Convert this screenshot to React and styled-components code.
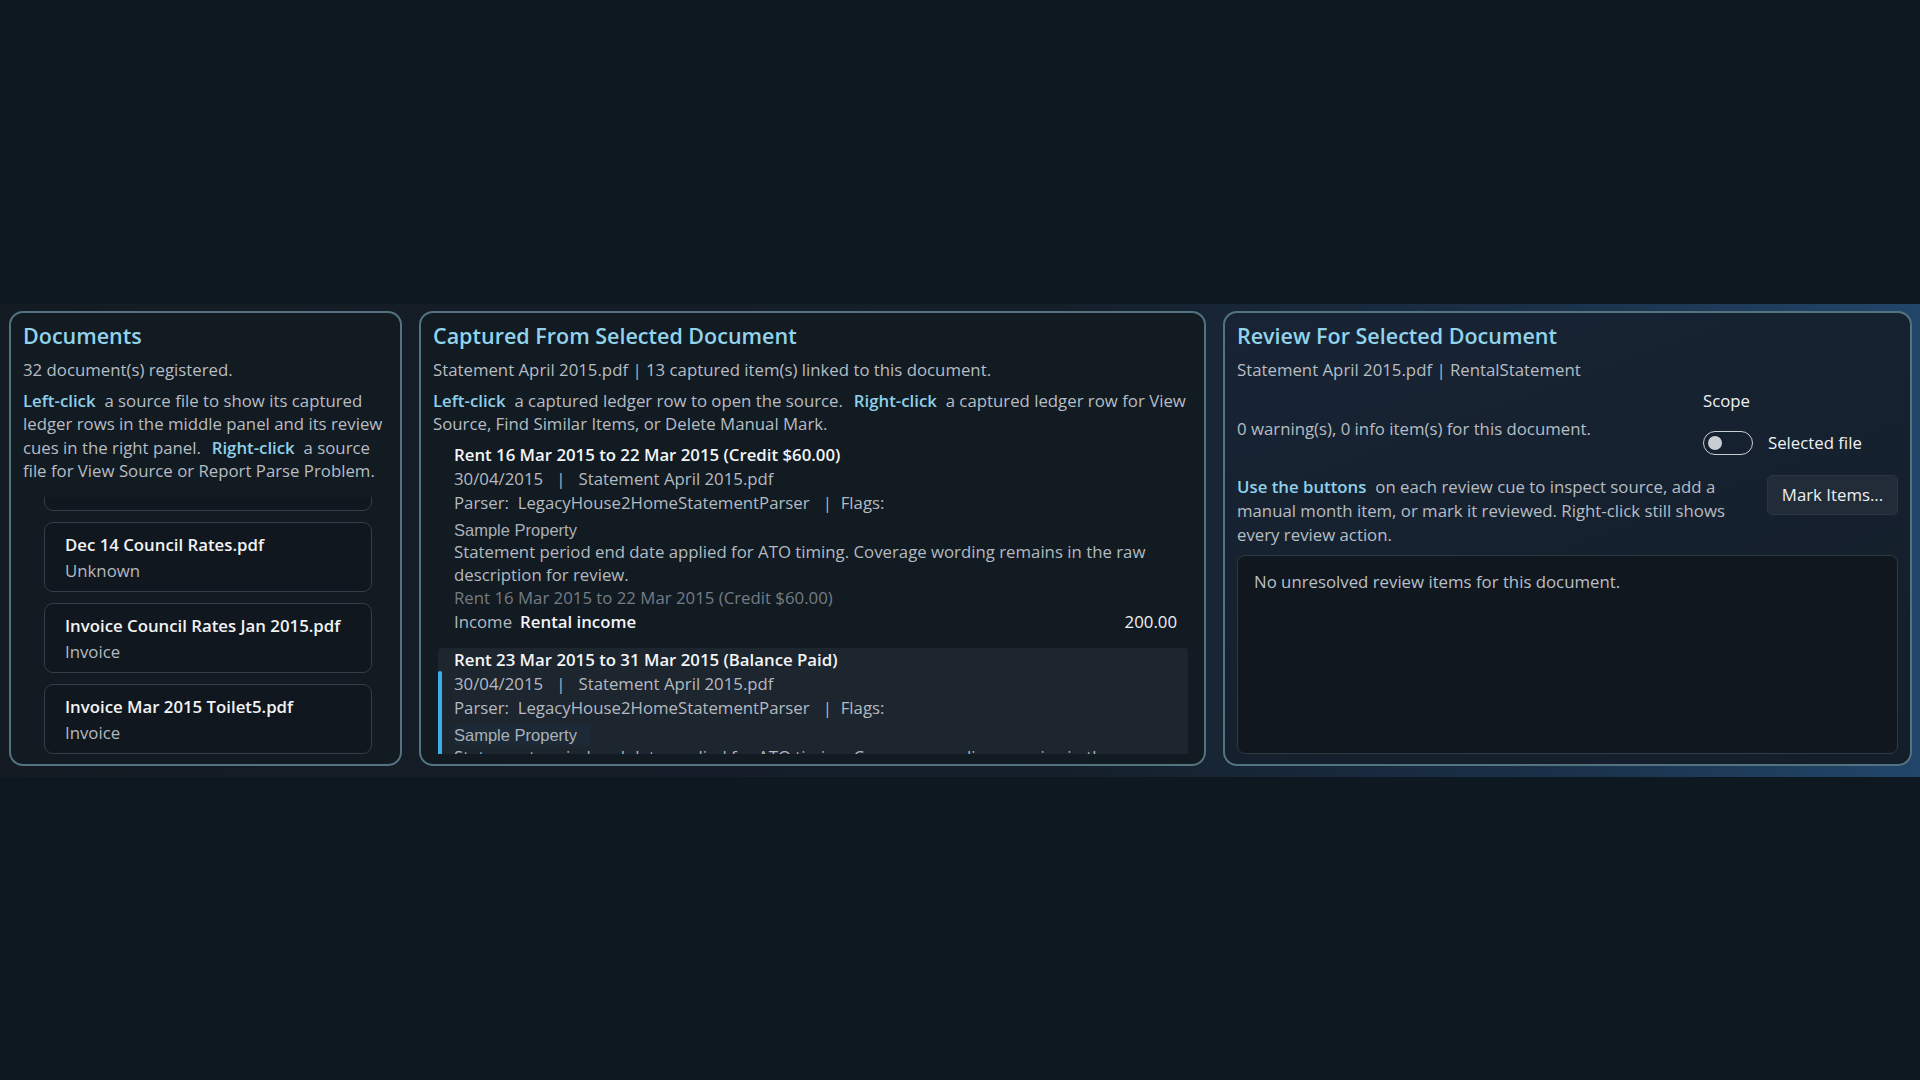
import React from 'react'
import styled, { createGlobalStyle } from 'styled-components'

const GlobalStyle = createGlobalStyle`
  * { box-sizing: border-box; }
  html, body {
    margin: 0;
    padding: 0;
    background: #0e1820;
  }
  body {
    font-family: "Open Sans", "Noto Sans", sans-serif;
    font-size: 16.8px;
    color: #b6bdc4;
  }
`

const documents = [
  { name: 'Nov 14 Council Rates.pdf', kind: 'Unknown' },
  { name: 'Dec 14 Council Rates.pdf', kind: 'Unknown' },
  { name: 'Invoice Council Rates Jan 2015.pdf', kind: 'Invoice' },
  { name: 'Invoice Mar 2015 Toilet5.pdf', kind: 'Invoice' },
]

const entries = [
  {
    id: 1,
    title: 'Rent 16 Mar 2015 to 22 Mar 2015 (Credit $60.00)',
    date: '30/04/2015',
    file: 'Statement April 2015.pdf',
    parser: 'LegacyHouse2HomeStatementParser',
    property: 'Sample Property',
    note: 'Statement period end date applied for ATO timing. Coverage wording remains in the raw description for review.',
    raw: 'Rent 16 Mar 2015 to 22 Mar 2015 (Credit $60.00)',
    type: 'Income',
    category: 'Rental income',
    amount: '200.00',
  },
  {
    id: 2,
    title: 'Rent 23 Mar 2015 to 31 Mar 2015 (Balance Paid)',
    date: '30/04/2015',
    file: 'Statement April 2015.pdf',
    parser: 'LegacyHouse2HomeStatementParser',
    property: 'Sample Property',
    note: 'Statement period end date applied for ATO timing. Coverage wording remains in the raw description for review.',
    raw: 'Rent 23 Mar 2015 to 31 Mar 2015 (Balance Paid)',
    type: 'Income',
    category: 'Rental income',
    amount: '450.00',
    selected: true,
  },
]

const Page = styled.div`
  min-height: 100vh;
  display: flex;
  align-items: center;
`

const Band = styled.main`
  width: 100%;
  display: grid;
  grid-template-columns: 393px 787px 1fr;
  column-gap: 17px;
  padding: 7px 8px 11px 9px;
  background: linear-gradient(90deg, #141b23 0%, #151f2a 55%, #1a3048 80%, #21466a 100%);
`

const Panel = styled.section`
  height: 455px;
  display: flex;
  flex-direction: column;
  padding: 8px ${p => (p.$tight ? '8px' : '12px')} 10px 12px;
  border: 2px solid #52737f;
  border-radius: 14px;
  background: ${p => (p.$tinted ? 'linear-gradient(160deg, #182434 0%, #141e2a 100%)' : '#121a22')};
  overflow: hidden;
`

const Title = styled.h2`
  margin: 0;
  font-size: 21.5px;
  font-weight: 600;
  line-height: 30px;
  color: #92d3ec;
`

const Sub = styled.p`
  margin: 7px 0 0;
  line-height: 24px;
`

const Help = styled.p`
  margin: 7px 0 0;
  line-height: 23.5px;
`

const Hint = styled.b`
  font-weight: 600;
  color: #8fd0ea;
  margin: 0 4.5px 0 6.5px;
  &:first-child {
    margin-left: 0;
  }
`

/* documents column */
const DocList = styled.div`
  flex: 1;
  min-height: 0;
  margin-top: 14px;
  padding: 0 16px 0 21px;
  display: flex;
  flex-direction: column;
  justify-content: flex-end;
  gap: 11px;
  overflow: hidden;
`

const DocCard = styled.div`
  flex-shrink: 0;
  height: 70px;
  padding: 10px 20px;
  border: 1.5px solid #343e48;
  border-radius: 9px;
  background: #10171e;
`

const DocName = styled.div`
  font-weight: 600;
  line-height: 24px;
  color: #f1f3f5;
  white-space: nowrap;
`

const DocKind = styled.div`
  margin-top: 2px;
  line-height: 24px;
  color: #b3bac1;
`

/* captured ledger column */
const Ledger = styled.div`
  flex: 1;
  min-height: 0;
  margin-top: 7px;
  padding: 0 8px 0 5px;
  display: flex;
  flex-direction: column;
  gap: 14px;
  overflow: hidden;
`

const Entry = styled.article`
  position: relative;
  flex-shrink: 0;
  padding: 0 11px 0 16px;
  border-radius: 4px;
  background: ${p => (p.$selected ? '#1d252f' : 'transparent')};
`

const Accent = styled.span`
  position: absolute;
  left: 0;
  top: 23px;
  bottom: 23px;
  width: 4px;
  border-radius: 2px;
  background: #3daee9;
`

const EntryTitle = styled.div`
  font-weight: 600;
  line-height: 24px;
  color: #f3f5f7;
`

const Meta = styled.div`
  line-height: 24px;
  color: #b3bac1;
  white-space: pre;
`

const Property = styled.div`
  width: fit-content;
  margin-top: 5px;
  padding-right: 13px;
  font-family: "Liberation Sans", Arial, sans-serif;
  font-size: 16.5px;
  line-height: 20px;
  color: #a9b0b7;
  background: ${p => (p.$hl ? '#1c2936' : 'transparent')};
`

const Note = styled.div`
  line-height: 23px;
  color: #b3bac1;
`

const Raw = styled.div`
  line-height: 24px;
  color: #747c85;
`

const AmountRow = styled.div`
  display: flex;
  align-items: center;
  justify-content: space-between;
  line-height: 24px;
`

const Category = styled.span`
  color: #b3bac1;
  b {
    margin-left: 8px;
    font-weight: 600;
    color: #f3f5f7;
  }
`

const Amount = styled.span`
  color: #eef1f3;
`

/* review column */
const ScopeRow = styled.div`
  display: flex;
  align-items: center;
  justify-content: space-between;
  margin-top: 7px;
`

const Counts = styled.p`
  margin: 0;
  padding-top: 10px;
  line-height: 24px;
`

const ScopeBox = styled.div`
  width: 195px;
  color: #eef1f3;
`

const ScopeLabel = styled.div`
  line-height: 24px;
`

const ToggleRow = styled.label`
  display: flex;
  align-items: center;
  gap: 15px;
  height: 32px;
  margin-top: 14px;
`

const Toggle = styled.span`
  position: relative;
  width: 50px;
  height: 24px;
  border: 1.5px solid #c9ced3;
  border-radius: 12px;
  &::after {
    content: '';
    position: absolute;
    left: 4px;
    top: 50%;
    width: 14px;
    height: 14px;
    margin-top: -7px;
    border-radius: 50%;
    background: #c9ced3;
  }
`

const ActionRow = styled.div`
  display: flex;
  align-items: flex-start;
  justify-content: space-between;
  gap: 24px;
  margin-top: 16px;
`

const ActionText = styled.p`
  margin: 0;
  max-width: 500px;
  line-height: 24px;
`

const MarkButton = styled.button`
  flex-shrink: 0;
  width: 131px;
  height: 40px;
  border: 1px solid #2a3542;
  border-radius: 5px;
  background: #212c38;
  color: #eceff1;
  font: inherit;
`

const EmptyBox = styled.div`
  flex: 1;
  margin-top: 8px;
  padding: 14px 16px;
  border: 1.5px solid #2e3944;
  border-radius: 8px;
  background: #10171f;
  line-height: 24px;
  color: #b9c0c7;
`

const LedgerEntry = ({ entry }) => (
  <Entry $selected={entry.selected}>
    {entry.selected && <Accent />}
    <EntryTitle>{entry.title}</EntryTitle>
    <Meta>{`${entry.date}   |   ${entry.file}`}</Meta>
    <Meta>{`Parser:  ${entry.parser}   |  Flags:`}</Meta>
    <Property $hl={entry.selected}>{entry.property}</Property>
    <Note>{entry.note}</Note>
    <Raw>{entry.raw}</Raw>
    <AmountRow>
      <Category>
        {entry.type}
        <b>{entry.category}</b>
      </Category>
      <Amount>{entry.amount}</Amount>
    </AmountRow>
  </Entry>
)

export default function App() {
  return (
    <Page>
      <GlobalStyle />
      <Band>
        <Panel>
          <Title>Documents</Title>
          <Sub>32 document(s) registered.</Sub>
          <Help>
            <Hint>Left-click</Hint> a source file to show its captured ledger rows in the middle panel and its
            review cues in the right panel. <Hint>Right-click</Hint> a source file for View Source or Report
            Parse Problem.
          </Help>
          <DocList>
            {documents.map(doc => (
              <DocCard key={doc.name}>
                <DocName>{doc.name}</DocName>
                <DocKind>{doc.kind}</DocKind>
              </DocCard>
            ))}
          </DocList>
        </Panel>

        <Panel $tight>
          <Title>Captured From Selected Document</Title>
          <Sub>Statement April 2015.pdf | 13 captured item(s) linked to this document.</Sub>
          <Help>
            <Hint>Left-click</Hint> a captured ledger row to open the source. <Hint>Right-click</Hint> a captured
            ledger row for View Source, Find Similar Items, or Delete Manual Mark.
          </Help>
          <Ledger>
            {entries.map(entry => (
              <LedgerEntry key={entry.id} entry={entry} />
            ))}
          </Ledger>
        </Panel>

        <Panel $tinted>
          <Title>Review For Selected Document</Title>
          <Sub>Statement April 2015.pdf | RentalStatement</Sub>
          <ScopeRow>
            <Counts>0 warning(s), 0 info item(s) for this document.</Counts>
            <ScopeBox>
              <ScopeLabel>Scope</ScopeLabel>
              <ToggleRow>
                <Toggle />
                Selected file
              </ToggleRow>
            </ScopeBox>
          </ScopeRow>
          <ActionRow>
            <ActionText>
              <Hint>Use the buttons</Hint> on each review cue to inspect source, add a manual month item, or
              mark it reviewed. Right-click still shows every review action.
            </ActionText>
            <MarkButton>Mark Items...</MarkButton>
          </ActionRow>
          <EmptyBox>No unresolved review items for this document.</EmptyBox>
        </Panel>
      </Band>
    </Page>
  )
}
